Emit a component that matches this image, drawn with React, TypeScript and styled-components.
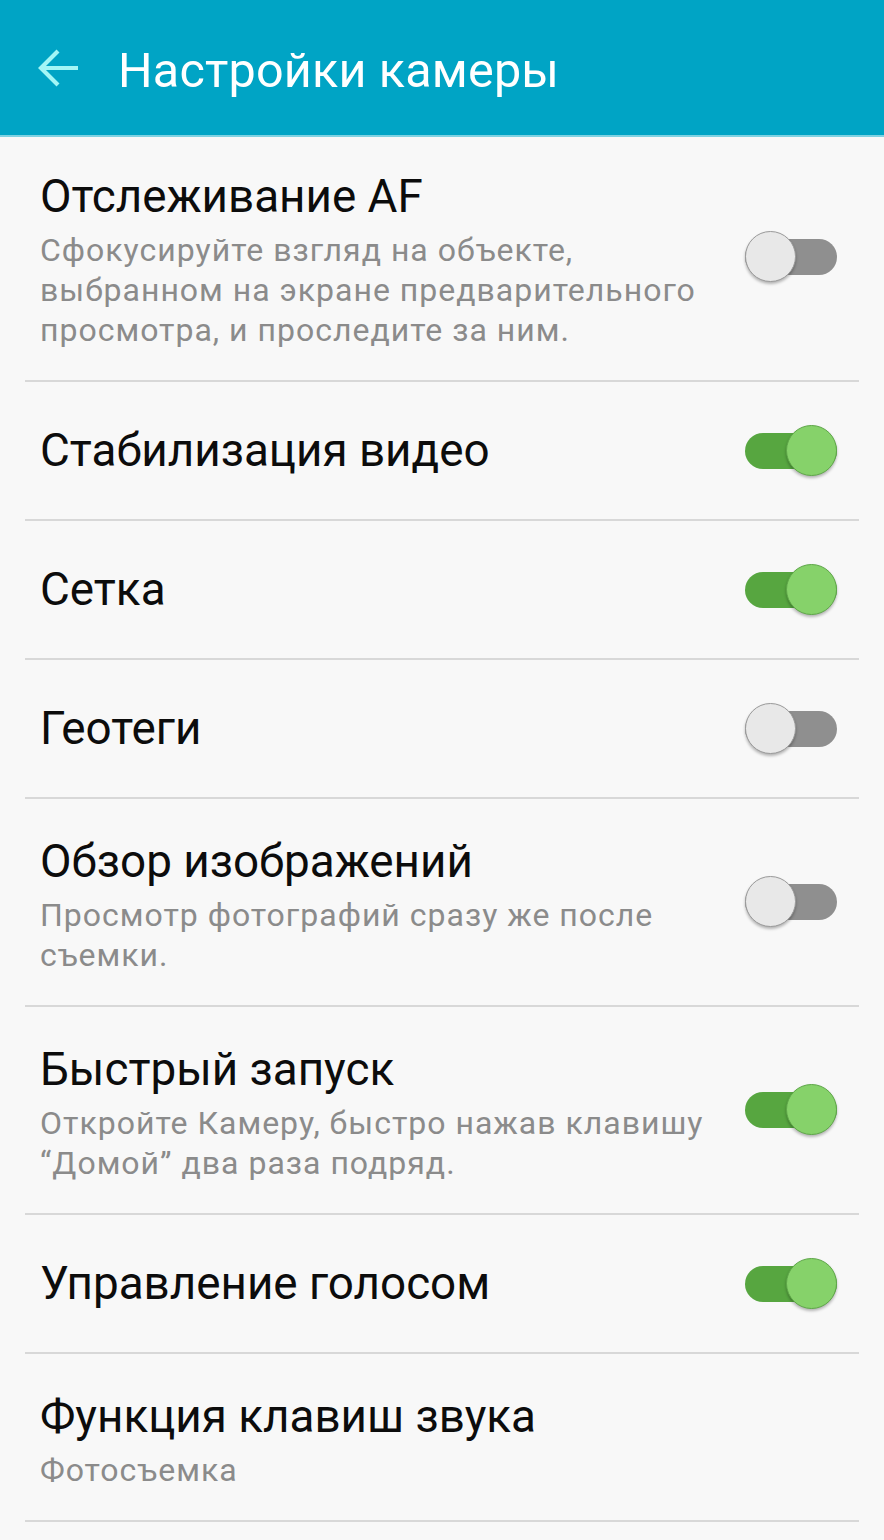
import styled, { createGlobalStyle } from "styled-components";

const GlobalStyle = createGlobalStyle`
	html, body {
		margin: 0;
		padding: 0;
		background: #f8f8f8;
	}
	body {
		font-family: Roboto, "Noto Sans", "Liberation Sans", sans-serif;
	}
`;

const Screen = styled.div`
	width: 884px;
	min-height: 1540px;
	background: #f8f8f8;
	overflow: hidden;
`;

const Header = styled.header`
	height: 135px;
	background: #00a4c5;
	border-bottom: 2px solid #7fd2e2;
	display: flex;
	align-items: center;
	padding-left: 36px;
	gap: 36px;
`;

const BackIcon = styled.svg`
	width: 46px;
	height: 46px;
	flex-shrink: 0;
`;

const HeaderTitle = styled.h1`
	margin: 0;
	padding-top: 5px;
	font-size: 48.5px;
	font-weight: 400;
	color: #ffffff;
	letter-spacing: 0.2px;
`;

const List = styled.div`
	padding: 0 25px;
`;

const Row = styled.div<{ $single: boolean; $first?: boolean }>`
	display: flex;
	align-items: center;
	justify-content: space-between;
	box-sizing: border-box;
	min-height: 139px;
	padding: ${(p) => (p.$single ? "0" : p.$first ? "27px 0 30px" : "30px 0 30px")};
	border-bottom: 2px solid #d8d8d8;
`;

const TextBlock = styled.div`
	padding-left: 15px;
	display: flex;
	flex-direction: column;
`;

const Title = styled.div`
	font-size: 45.8px;
	line-height: 66px;
	color: #0c0c0c;
`;

const Subtitle = styled.div`
	font-size: 32px;
	line-height: 40px;
	letter-spacing: 1px;
	color: #8b8b8b;
	max-width: 690px;
`;

const Switch = styled.div`
	position: relative;
	width: 92px;
	height: 52px;
	flex-shrink: 0;
	margin-right: 22px;
	margin-left: 20px;
`;

const Track = styled.div<{ $on: boolean }>`
	position: absolute;
	left: 0;
	right: 0;
	top: 8px;
	height: 36px;
	border-radius: 18px;
	background: ${(p) => (p.$on ? "#57a640" : "#8f8f8f")};
`;

const Thumb = styled.div<{ $on: boolean }>`
	position: absolute;
	top: 0;
	left: ${(p) => (p.$on ? "41px" : "0")};
	width: 51px;
	height: 51px;
	border-radius: 50%;
	box-sizing: border-box;
	background: ${(p) => (p.$on ? "#86d26a" : "#e8e8e8")};
	border: 1px solid ${(p) => (p.$on ? "#5ea748" : "#9a9a9a")};
	box-shadow: 0 2px 3px rgba(0, 0, 0, 0.28);
`;

type Item = {
	title: string;
	sub?: string;
	on?: boolean;
};

const items: Item[] = [
	{
		title: "Отслеживание AF",
		sub: "Сфокусируйте взгляд на объекте, выбранном на экране предварительного просмотра, и проследите за ним.",
		on: false,
	},
	{ title: "Стабилизация видео", on: true },
	{ title: "Сетка", on: true },
	{ title: "Геотеги", on: false },
	{
		title: "Обзор изображений",
		sub: "Просмотр фотографий сразу же после съемки.",
		on: false,
	},
	{
		title: "Быстрый запуск",
		sub: "Откройте Камеру, быстро нажав клавишу “Домой” два раза подряд.",
		on: true,
	},
	{ title: "Управление голосом", on: true },
	{ title: "Функция клавиш звука", sub: "Фотосъемка" },
];

function Toggle({ on }: { on: boolean }) {
	return (
		<Switch>
			<Track $on={on} />
			<Thumb $on={on} />
		</Switch>
	);
}

export default function App() {
	return (
		<Screen>
			<GlobalStyle />
			<Header>
				<BackIcon viewBox="0 0 46 46" fill="none">
					<path
						d="M5 23 H42 M22 6 L5 23 L22 40"
						stroke="#a3f6f6"
						strokeWidth="4.2"
						strokeLinecap="butt"
						strokeLinejoin="miter"
					/>
				</BackIcon>
				<HeaderTitle>Настройки камеры</HeaderTitle>
			</Header>
			<List>
				{items.map((it, i) => (
					<Row key={it.title} $single={!it.sub} $first={i === 0}>
						<TextBlock>
							<Title>{it.title}</Title>
							{it.sub && <Subtitle>{it.sub}</Subtitle>}
						</TextBlock>
						{it.on !== undefined && <Toggle on={it.on} />}
					</Row>
				))}
			</List>
		</Screen>
	);
}
